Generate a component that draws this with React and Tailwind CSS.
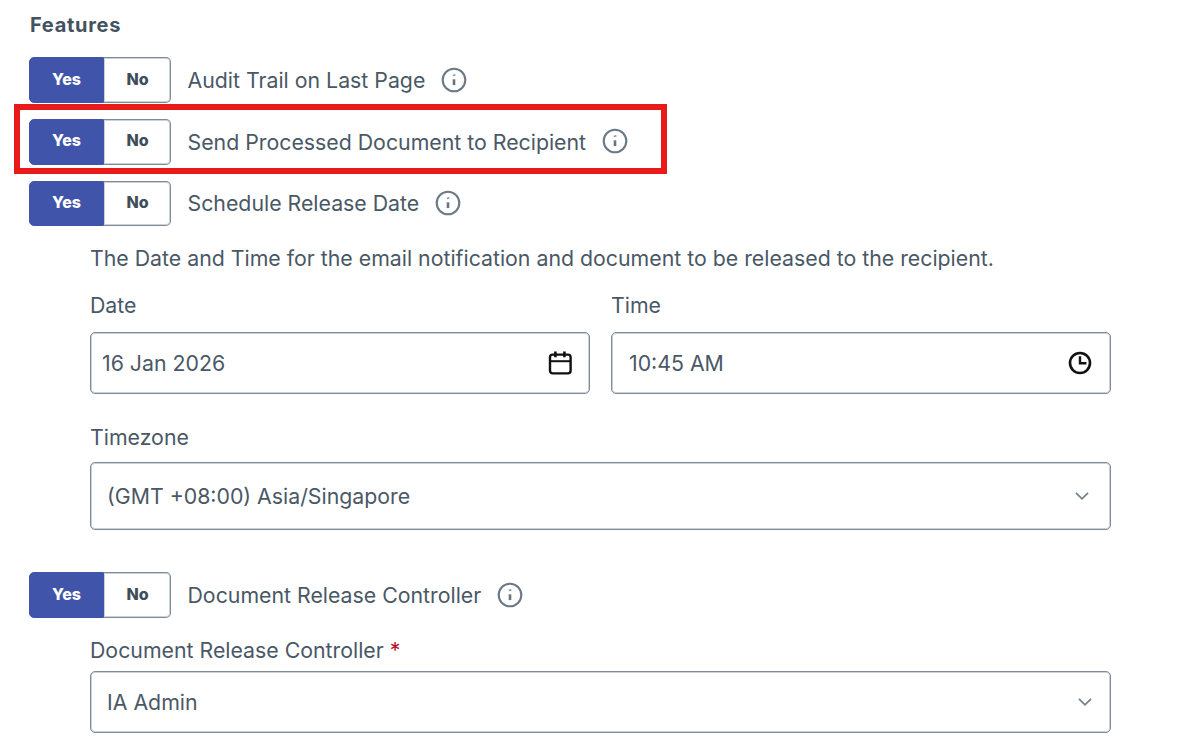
import { useState } from "react";

function InfoIcon({ className = "" }) {
  return (
    <svg width="26" height="26" viewBox="0 0 26 26" fill="none" className={`block shrink-0 ${className}`}>
      <circle cx="13" cy="13" r="11.3" stroke="#6b7886" strokeWidth="2.1" />
      <path d="M13 12.3v5.8" stroke="#66727f" strokeWidth="2.6" />
      <path d="M11.6 12.8h1.4" stroke="#9ba4ae" strokeWidth="1" />
      <path d="M11.8 8.6l2.6-.8" stroke="#8a95a1" strokeWidth="1.6" />
    </svg>
  );
}

function CalendarIcon() {
  return (
    <svg width="24" height="24" viewBox="0 0 24 24" fill="none" stroke="#111" strokeWidth="2.4" className="block">
      <rect x="2" y="3.6" width="20.6" height="18.8" rx="2.6" />
      <path d="M2 10.2h20.4" strokeWidth="2" />
      <path d="M7.4 .6v5.6M16.4 .6v5.6" strokeWidth="2.6" />
    </svg>
  );
}

function ClockIcon() {
  return (
    <svg width="24" height="24" viewBox="0 0 24 24" fill="none" stroke="#111" strokeWidth="2.6" className="block">
      <circle cx="12" cy="12" r="10" />
      <path d="M12 5.2v7h6.4" strokeWidth="2.4" />
    </svg>
  );
}

function Chevron() {
  return (
    <svg width="14" height="10" viewBox="0 0 14 10" fill="none" className="block">
      <path d="M1 1.8l6 6 6-6" stroke="#74818e" strokeWidth="1.8" />
    </svg>
  );
}

function YesNo({ className, textClass }) {
  const [yes, setYes] = useState(true);
  const on = "bg-[#4054a9] text-white border-[#4054a9]";
  const off = "bg-white text-[#3f4d5a] border-[#7f8b99] shadow-[inset_0_0_0_1px_#ccd1d7]";
  const base = "flex items-center justify-center border text-[16px] leading-none font-extrabold";
  return (
    <div className={`flex w-[142px] shrink-0 ${className}`}>
      <button onClick={() => setYes(true)} className={`${base} w-[75px] rounded-l-[5px] ${textClass} ${yes ? on : off}`}>
        Yes
      </button>
      <button onClick={() => setYes(false)} className={`${base} w-[67px] rounded-r-[5px] border-l-0 pl-px ${textClass} ${yes ? off : on}`}>
        No
      </button>
    </div>
  );
}

function FeatureRow({ label, className, toggleClass = "h-[46px]", textClass = "pb-0.5", labelClass, iconClass, children }) {
  return (
    <div className={`relative flex items-center ${className}`}>
      <YesNo className={toggleClass} textClass={textClass} />
      <span className={`ml-[16.5px] shrink-0 whitespace-nowrap ${labelClass}`}>{label}</span>
      <InfoIcon className={iconClass} />
      {children}
    </div>
  );
}

const field =
  "flex items-center justify-between rounded-[5px] border border-[#7f8b99] bg-white shadow-[inset_0_0_0_1px_#ccd1d7]";

export default function App() {
  return (
    <main className="h-[752px] w-[1200px] overflow-hidden bg-white pt-[10px] pl-[29px] font-['Inter','Liberation_Sans',sans-serif] text-[21.3px] leading-[30px] text-[#4a5866]">
      <h1 className="pl-px text-[20px] font-bold tracking-[0.7px] text-[#44525f]">Features</h1>

      <FeatureRow label="Audit Trail on Last Page" className="mt-[17px]" labelClass="w-[253.5px]" />
      <FeatureRow
        label="Send Processed Document to Recipient"
        className="mt-4"
        textClass="pb-1"
        labelClass="w-[414.5px]"
        iconClass="mb-0.5"
      >
        <div className="pointer-events-none absolute -top-[15px] -left-[15px] h-[70px] w-[653px] border-[6px] border-[#e81a1a]" />
      </FeatureRow>
      <FeatureRow
        label="Schedule Release Date"
        className="mt-4"
        toggleClass="h-[45px]"
        textClass="pb-[3px]"
        labelClass="w-[247.5px] pb-0.5"
        iconClass="mb-px"
      />

      <section className="ml-[61px] w-[1021px]">
        <p className="mt-[17px] whitespace-nowrap">
          The Date and Time for the email notification and document to be released to the recipient.
        </p>
        <div className="mt-[17px] grid grid-cols-2 gap-x-[21px]">
          <div>
            <div>Date</div>
            <div className={`${field} mt-3 h-[62px] pr-[17px] pl-[11px]`}>
              <span>16 Jan 2026</span>
              <CalendarIcon />
            </div>
          </div>
          <div>
            <div>Time</div>
            <div className={`${field} mt-3 h-[62px] pr-[18px] pl-[17px]`}>
              <span>10:45 AM</span>
              <ClockIcon />
            </div>
          </div>
        </div>
        <div className="mt-7">Timezone</div>
        <div className={`${field} mt-[10px] h-[68px] pr-[21px] pl-[16px]`}>
          <span>(GMT +08:00) Asia/Singapore</span>
          <Chevron />
        </div>
      </section>

      <FeatureRow label="Document Release Controller" className="mt-[42px]" labelClass="w-[309.5px]" />

      <section className="ml-[61px] w-[1021px]">
        <div className="mt-[17px]">
          Document Release Controller <span className="text-[#b3122a]">*</span>
        </div>
        <div className={`${field} mt-[6px] h-[62px] pr-[18px] pl-[16px]`}>
          <span>IA Admin</span>
          <Chevron />
        </div>
      </section>
    </main>
  );
}
